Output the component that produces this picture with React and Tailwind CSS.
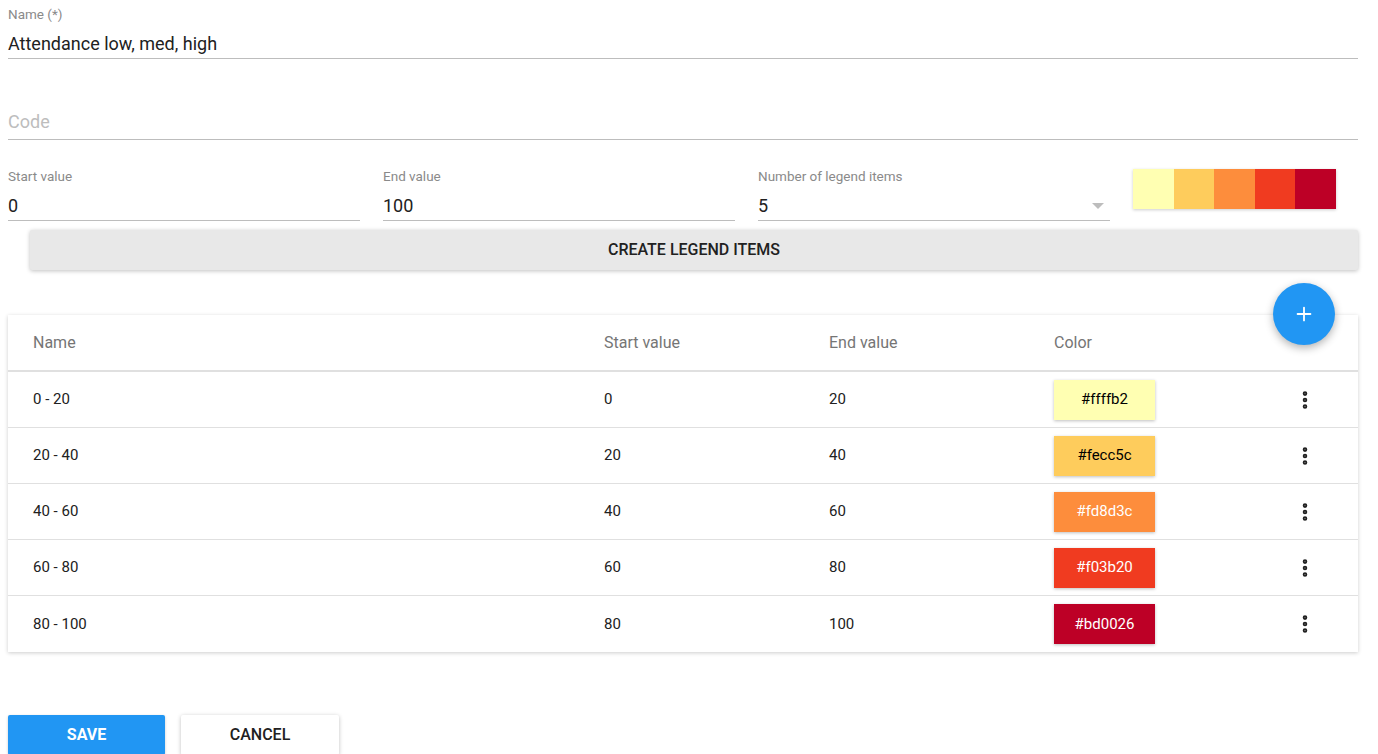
import { Plus, MoreVertical } from "lucide-react";

const rows = [
  { name: "0 - 20", start: "0", end: "20", color: "#ffffb2", text: "text-black" },
  { name: "20 - 40", start: "20", end: "40", color: "#fecc5c", text: "text-black" },
  { name: "40 - 60", start: "40", end: "60", color: "#fd8d3c", text: "text-white" },
  { name: "60 - 80", start: "60", end: "80", color: "#f03b20", text: "text-white" },
  { name: "80 - 100", start: "80", end: "100", color: "#bd0026", text: "text-white" },
];

const swatches = ["#ffffb2", "#fecc5c", "#fd8d3c", "#f03b20", "#bd0026"];

function Field({ label, value, placeholder, select }) {
  return (
    <div className="flex flex-col">
      <div className="h-[20px] text-[13.5px] leading-[20px] text-[#8a8a8a]">{label}</div>
      <div className="flex items-end h-[35px] pb-[4px] border-b border-[#bdbdbd]">
        {value ? (
          <span className="flex-1 text-[18px] leading-[20px] text-[#212121]">{value}</span>
        ) : (
          <span className="flex-1 text-[18px] leading-[20px] text-[#bdbdbd]">{placeholder}</span>
        )}
        {select && <span className="mr-[6px] mb-[7px] w-0 h-0 border-l-[6px] border-r-[6px] border-t-[6px] border-l-transparent border-r-transparent border-t-[#bdbdbd]" />}
      </div>
    </div>
  );
}

export default function App() {
  return (
    <div className="bg-white w-[1378px] h-[754px] overflow-hidden px-[8px] pt-[4px] text-[#212121]" style={{ fontFamily: "Roboto, 'Liberation Sans', sans-serif" }}>
      <div className="pr-[12px]">
        <Field label="Name (*)" value="Attendance low, med, high" />
        <div className="flex items-end h-[81px] border-b border-[#bdbdbd] pb-[7px]">
          <span className="text-[18px] leading-[20px] text-[#bdbdbd]">Code</span>
        </div>
      </div>

      <div className="flex items-start gap-[23px] mt-[26px] pr-[23px]">
        <div className="w-[352px]">
          <Field label="Start value" value="0" />
        </div>
        <div className="w-[352px]">
          <Field label="End value" value="100" />
        </div>
        <div className="w-[352px]">
          <Field label="Number of legend items" value="5" select />
        </div>
        <div className="flex mt-[3px] shadow-[0_1px_3px_rgba(0,0,0,0.2)]">
          {swatches.map((c) => (
            <div key={c} className="w-[40.6px] h-[40px]" style={{ backgroundColor: c }} />
          ))}
        </div>
      </div>

      <div className="pl-[22px] pr-[12px] mt-[9px]">
        <button className="w-full h-[40px] rounded-[2px] bg-[#e8e8e8] shadow-[0_1px_4px_rgba(0,0,0,0.25)] text-[16px] font-medium text-[#212121]">
          CREATE LEGEND ITEMS
        </button>
      </div>

      <div className="relative mt-[45px] mr-[12px] bg-white shadow-[0_1px_4px_rgba(0,0,0,0.2)]">
        <button className="absolute right-[23px] top-[-32px] w-[62px] h-[62px] rounded-full bg-[#2196f3] shadow-[0_3px_8px_rgba(0,0,0,0.3)] flex items-center justify-center">
          <Plus className="w-[22px] h-[22px] text-white" strokeWidth={2} />
        </button>
        <div className="grid grid-cols-[596px_225px_225px_232px_1fr] items-center h-[57px] border-b-2 border-[#e0e0e0] text-[16px] text-[#757575]">
          <div className="pl-[25px]">Name</div>
          <div>Start value</div>
          <div>End value</div>
          <div>Color</div>
          <div />
        </div>
        {rows.map((r, i) => (
          <div
            key={r.name}
            className={`grid grid-cols-[596px_225px_225px_232px_1fr] items-center h-[56px] text-[15px] text-[#212121] ${i < rows.length - 1 ? "border-b border-[#e0e0e0]" : ""}`}
          >
            <div className="pl-[25px]">{r.name}</div>
            <div>{r.start}</div>
            <div>{r.end}</div>
            <div>
              <div
                className={`w-[101px] h-[40px] flex items-center justify-center text-[15px] shadow-[0_1px_3px_rgba(0,0,0,0.25)] ${r.text}`}
                style={{ backgroundColor: r.color }}
              >
                {r.color}
              </div>
            </div>
            <div className="pl-[8px]">
              <MoreVertical className="w-[22px] h-[22px] text-[#212121]" strokeWidth={3} />
            </div>
          </div>
        ))}
      </div>

      <div className="flex gap-[16px] mt-[63px]">
        <button className="w-[157px] h-[40px] rounded-[2px] bg-[#2196f3] text-white text-[16px] font-bold shadow-[0_1px_3px_rgba(0,0,0,0.2)]">
          SAVE
        </button>
        <button className="w-[158px] h-[40px] rounded-[2px] bg-white text-[#212121] text-[16px] font-medium shadow-[0_1px_4px_rgba(0,0,0,0.25)]">
          CANCEL
        </button>
      </div>
    </div>
  );
}
